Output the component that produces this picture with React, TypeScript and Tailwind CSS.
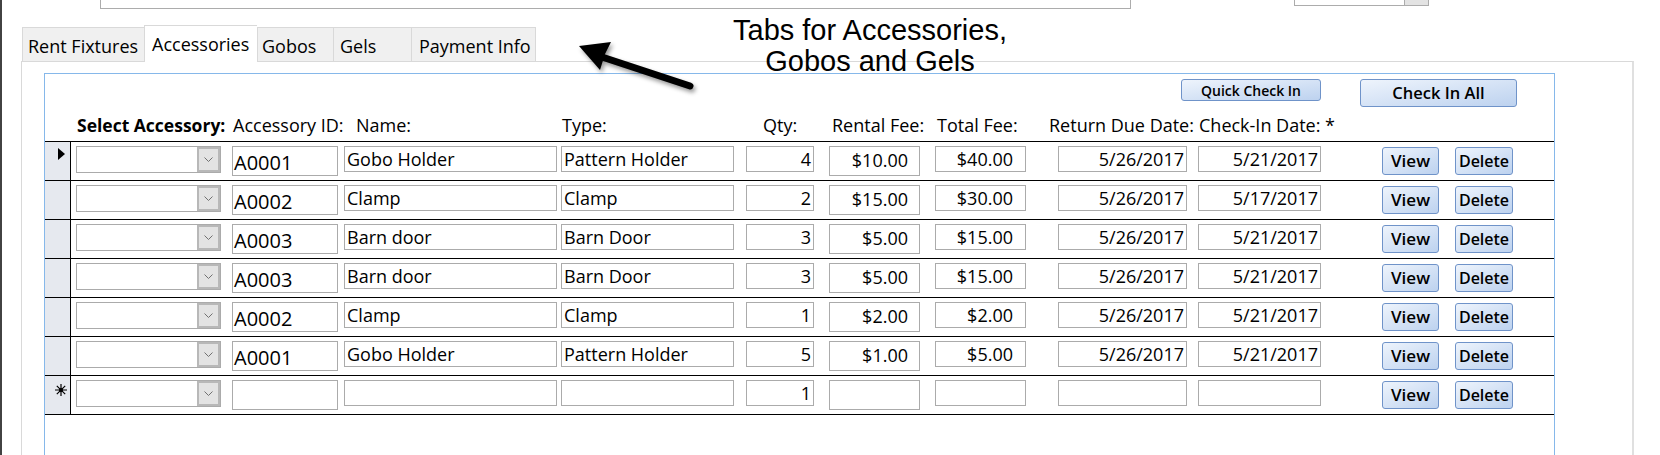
import * as React from "react"

type Row = {
  id: string
  name: string
  type: string
  qty: string
  fee: string
  total: string
  due: string
  checkIn: string
}

const rows: Row[] = [
  { id: "A0001", name: "Gobo Holder", type: "Pattern Holder", qty: "4", fee: "$10.00", total: "$40.00", due: "5/26/2017", checkIn: "5/21/2017" },
  { id: "A0002", name: "Clamp", type: "Clamp", qty: "2", fee: "$15.00", total: "$30.00", due: "5/26/2017", checkIn: "5/17/2017" },
  { id: "A0003", name: "Barn door", type: "Barn Door", qty: "3", fee: "$5.00", total: "$15.00", due: "5/26/2017", checkIn: "5/21/2017" },
  { id: "A0003", name: "Barn door", type: "Barn Door", qty: "3", fee: "$5.00", total: "$15.00", due: "5/26/2017", checkIn: "5/21/2017" },
  { id: "A0002", name: "Clamp", type: "Clamp", qty: "1", fee: "$2.00", total: "$2.00", due: "5/26/2017", checkIn: "5/21/2017" },
  { id: "A0001", name: "Gobo Holder", type: "Pattern Holder", qty: "5", fee: "$1.00", total: "$5.00", due: "5/26/2017", checkIn: "5/21/2017" },
]

const field = "shrink-0 overflow-hidden whitespace-nowrap border border-[#ababab] bg-white"
const btn =
  "flex shrink-0 items-center justify-center rounded-[3px] border border-[#6f93c9] bg-linear-to-br from-[#eef4fc] to-[#bdd2ef] font-semibold text-black"

function Chevron() {
  return (
    <svg width="9" height="5" viewBox="0 0 9 5">
      <path d="M0.5 0.5 L4.5 4.5 L8.5 0.5" fill="none" stroke="#707070" strokeWidth="1" />
    </svg>
  )
}

function Combo() {
  return (
    <div className="ml-[5px] flex h-[27px] w-[145px] shrink-0 border border-[#ababab] bg-white">
      <div className="flex-1" />
      <div className="flex w-[23px] items-center justify-center border-2 border-[#b8b8b8] bg-[#e3e3e3]">
        <Chevron />
      </div>
    </div>
  )
}

function Tab({ className, children }: { className: string; children: React.ReactNode }) {
  return (
    <div className={"shrink-0 whitespace-nowrap border-l border-t border-[#d9d9d9] pt-[6px] text-[18px] leading-[24px] " + className}>
      {children}
    </div>
  )
}

function DataRow({ row, marker }: { row?: Row; marker: "current" | "none" | "new" }) {
  return (
    <div className="flex h-[39px] border-b border-black">
      <div className="w-[26px] shrink-0 border-r border-black bg-[#e6e9ef] pl-[13px] pt-[6px]">
        {marker === "current" && (
          <svg width="7" height="12" viewBox="0 0 7 12">
            <path d="M0 0 L7 6 L0 12 Z" fill="#000" />
          </svg>
        )}
        {marker === "new" && (
          <svg width="12" height="12" viewBox="0 0 12 12" className="-ml-[3px] mt-[2px]">
            <path d="M6 0 V12 M0 6 H12 M1.8 1.8 L10.2 10.2 M10.2 1.8 L1.8 10.2" stroke="#000" strokeWidth="1.2" />
            <circle cx="6" cy="6" r="2" fill="#000" />
          </svg>
        )}
      </div>
      <div className="flex items-start pt-[4px] text-[18px] leading-[24px] text-black">
        <Combo />
        <div className={field + " ml-[11px] h-[30px] w-[106px] pl-[1px] text-[20px] leading-[32px]"}>{row?.id}</div>
        <div className={field + " ml-[6px] h-[26px] w-[213px] pl-[2px]"}>{row?.name}</div>
        <div className={field + " ml-[4px] h-[26px] w-[173px] pl-[2px]"}>{row?.type}</div>
        <div className={field + " ml-[12px] h-[26px] w-[68px] pr-[2px] text-right"}>{row ? row.qty : "1"}</div>
        <div className={field + " ml-[15px] h-[30px] w-[91px] pr-[11px] text-right leading-[27px]"}>{row?.fee}</div>
        <div className={field + " ml-[15px] h-[26px] w-[91px] pr-[12px] text-right"}>{row?.total}</div>
        <div className={field + " ml-[32px] h-[26px] w-[129px] pr-[2px] text-right"}>{row?.due}</div>
        <div className={field + " ml-[11px] h-[26px] w-[123px] pr-[2px] text-right"}>{row?.checkIn}</div>
        <div className={btn + " ml-[61px] mt-[1px] h-[28px] w-[57px] text-[17px]"}>View</div>
        <div className={btn + " ml-[16px] mt-[1px] h-[28px] w-[58px] text-[16px]"}>Delete</div>
      </div>
    </div>
  )
}

export default function App() {
  return (
    <div className="relative h-[455px] w-[1660px] overflow-hidden border-l-2 border-[#424242] bg-white font-['Open_Sans',sans-serif] text-black">
      {/* cut-off controls above the tab control */}
      <div className="flex h-[25px] items-start">
        <div className="ml-[98px] h-[9px] w-[1031px] border-x border-b border-[#acacac] bg-white" />
        <div className="ml-[163px] flex h-[6px] w-[135px] border-x border-b border-[#acacac]">
          <div className="flex-1" />
          <div className="w-[24px] border-l border-[#acacac] bg-[#e3e3e3]" />
        </div>
      </div>

      {/* tabs */}
      <div className="relative z-10 ml-[20px] flex h-[36px] items-end">
        <Tab className="h-[34px] w-[122px] bg-[#f0f0f0] pl-[5px]">Rent Fixtures</Tab>
        <Tab className="-mb-px h-[37px] w-[113px] bg-white pl-[7px]">Accessories</Tab>
        <Tab className="h-[34px] w-[76px] bg-[#f0f0f0] pl-[4px]">Gobos</Tab>
        <Tab className="h-[34px] w-[78px] bg-[#f0f0f0] pl-[6px]">Gels</Tab>
        <Tab className="h-[34px] w-[125px] border-r bg-[#f0f0f0] pl-[7px]">Payment Info</Tab>
      </div>

      {/* tab page */}
      <div className="ml-[19px] h-[420px] w-[1613px] border-l border-r-2 border-t border-l-[#d9d9d9] border-r-[#e0e0e0] border-t-[#d9d9d9] bg-white pt-[11px]">
        <div className="ml-[22px] h-[400px] w-[1511px] border border-[#86b8ea]">
          <div className="mt-[5px] flex items-start">
            <div className={btn + " ml-[1136px] h-[22px] w-[140px] text-[14px]"}>Quick Check In</div>
            <div className={btn + " ml-[39px] h-[28px] w-[157px] text-[16.5px]"}>Check In All</div>
          </div>

          <div className="mt-[6px] flex h-[24px] items-start whitespace-nowrap text-[18px] leading-[24px]">
            <div className="ml-[32px] w-[156px] shrink-0 text-[17.5px] font-bold">Select Accessory:</div>
            <div className="w-[123px] shrink-0">Accessory ID:</div>
            <div className="w-[206px] shrink-0">Name:</div>
            <div className="w-[201px] shrink-0">Type:</div>
            <div className="w-[69px] shrink-0">Qty:</div>
            <div className="w-[105px] shrink-0">Rental Fee:</div>
            <div className="w-[112px] shrink-0">Total Fee:</div>
            <div className="w-[150px] shrink-0">Return Due Date:</div>
            <div className="shrink-0">Check-In Date: *</div>
          </div>

          <div className="mt-[4px] border-t border-black">
            {rows.map((r, i) => (
              <DataRow key={i} row={r} marker={i === 0 ? "current" : "none"} />
            ))}
            <DataRow marker="new" />
          </div>
        </div>
      </div>

      {/* annotation laid over the form */}
      <div className="pointer-events-none absolute left-[719px] top-[15px] w-[298px] text-center font-['Liberation_Sans',Arial,sans-serif] text-[29px] leading-[31px] text-black">
        Tabs for Accessories,
        <br />
        Gobos and Gels
      </div>
      <svg
        className="pointer-events-none absolute left-[560px] top-[30px] drop-shadow-[2px_3px_2px_rgba(0,0,0,0.4)]"
        width="140"
        height="70"
        viewBox="0 0 140 70"
      >
        <path d="M40 27 L128 56" stroke="#000" strokeWidth="7" strokeLinecap="round" />
        <path d="M17 16 L49 12 L43 24 L38 40 Z" fill="#000" />
      </svg>
    </div>
  )
}
